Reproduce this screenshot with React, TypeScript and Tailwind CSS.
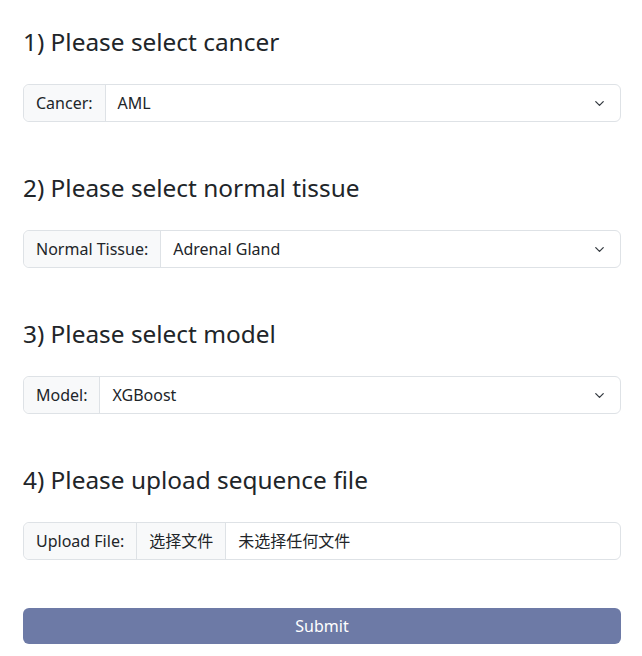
import { ChevronDown } from 'lucide-react'

const font = { fontFamily: '"Segoe UI", "Noto Sans", "Noto Sans CJK SC", sans-serif' }

function SelectGroup({ label, value }: { label: string; value: string }) {
  return (
    <div className="flex h-[38px] w-full rounded-md border border-[#dee2e6] text-[16px] text-[#212529]">
      <span className="flex items-center rounded-l-md border-r border-[#dee2e6] bg-[#f8f9fa] px-3">{label}</span>
      <div className="flex flex-1 items-center justify-between pl-3 pr-[13px]">
        <span>{value}</span>
        <ChevronDown size={15} strokeWidth={2} className="text-[#343a40]" />
      </div>
    </div>
  )
}

export default function App() {
  return (
    <div className="bg-white px-[23px] pt-[28px] pr-[21px]" style={font}>
      <h3 className="h-[30px] text-[24.4px] leading-[28px] text-[#212529]">1) Please select cancer</h3>
      <div className="mt-[26px]">
        <SelectGroup label="Cancer:" value="AML" />
      </div>

      <h3 className="mt-[52px] h-[30px] text-[24.4px] leading-[28px] text-[#212529]">2) Please select normal tissue</h3>
      <div className="mt-[26px]">
        <SelectGroup label="Normal Tissue:" value="Adrenal Gland" />
      </div>

      <h3 className="mt-[52px] h-[30px] text-[24.4px] leading-[28px] text-[#212529]">3) Please select model</h3>
      <div className="mt-[26px]">
        <SelectGroup label="Model:" value="XGBoost" />
      </div>

      <h3 className="mt-[52px] h-[30px] text-[24.4px] leading-[28px] text-[#212529]">4) Please upload sequence file</h3>
      <div className="mt-[26px] flex h-[38px] w-full rounded-md border border-[#dee2e6] text-[16px] text-[#212529]">
        <span className="flex items-center rounded-l-md border-r border-[#dee2e6] bg-[#f8f9fa] px-3">Upload File:</span>
        <span className="flex items-center border-r border-[#dee2e6] bg-[#f8f9fa] px-3">选择文件</span>
        <span className="flex items-center px-3">未选择任何文件</span>
      </div>

      <button className="mt-[48px] h-[36px] w-full rounded-md bg-[#6d7aa6] text-[16px] text-white">Submit</button>
    </div>
  )
}
